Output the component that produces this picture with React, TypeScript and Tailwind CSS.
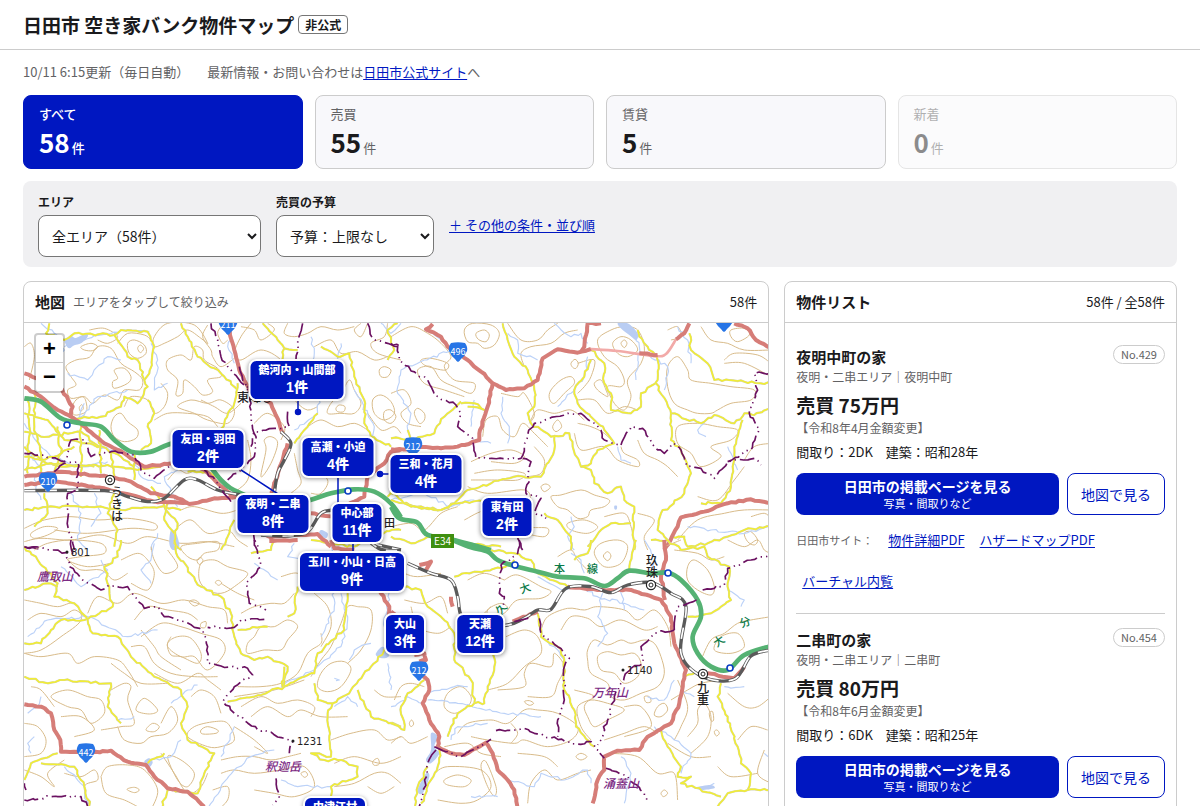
import { Fragment } from "react";

type Point = [number, number];

const parse = (s: string): Point[] =>
  s.split(" ").map((p) => p.split(",").map(Number) as Point);

/* Smooth curve through a list of points; a trailing "z" closes the ring. */
function smooth(src: string): string {
  const closed = src.endsWith("z");
  const pts = parse(closed ? src.slice(0, -1).trim() : src);
  const n = pts.length;
  const at = (i: number): Point =>
    closed ? pts[(i + n) % n] : pts[Math.max(0, Math.min(n - 1, i))];
  let d = `M${pts[0][0]},${pts[0][1]}`;
  const segments = closed ? n : n - 1;
  for (let i = 0; i < segments; i++) {
    const [a, b, c, e] = [at(i - 1), at(i), at(i + 1), at(i + 2)];
    d += `C${b[0] + (c[0] - a[0]) / 6},${b[1] + (c[1] - a[1]) / 6} ${c[0] - (e[0] - b[0]) / 6},${c[1] - (e[1] - b[1]) / 6} ${c[0]},${c[1]}`;
  }
  return d;
}

/* Irregular line for rivers, boundaries and mountain roads. */
function rough(src: string, amount: number): string {
  const pts = parse(src);
  let seed = pts[0][0] * 13 + pts[0][1] * 7 + 3;
  const rand = () => {
    seed = (seed * 9301 + 49297) % 233280;
    return seed / 233280 - 0.5;
  };
  let d = `M${pts[0][0]},${pts[0][1]}`;
  for (let i = 1; i < pts.length; i++) {
    const [x0, y0] = pts[i - 1];
    const [x1, y1] = pts[i];
    const steps = Math.max(1, Math.round(Math.hypot(x1 - x0, y1 - y0) / 12));
    for (let k = 1; k <= steps; k++) {
      const t = k / steps;
      const j = k === steps ? 0 : amount;
      d += `L${(x0 + (x1 - x0) * t + rand() * j).toFixed(1)},${(y0 + (y1 - y0) * t + rand() * j).toFixed(1)}`;
    }
  }
  return d;
}

interface Tile {
  x: number;
  y: number;
  contours: string[];
  rivers: string[];
  lakes: string[];
  yellow: string[];
  red: string[];
  paleRed?: string[];
  green: string[];
  rail: string[];
  border: string[];
}

const tiles: Tile[] = [
  {
    x: 20,
    y: 280,
    contours: [
      "135,260 165,240 205,232 230,200 270,205 300,250 340,275 365,300 355,330 310,330 290,360 250,345 215,370 190,350 150,355 140,330 165,315 150,290z",
      "280,270 310,265 330,290 320,310 280,325 275,305 290,295z",
      "320,190 340,180 370,195 375,220 350,235 325,220z",
      "350,205 358,195 368,206 358,218z",
      "180,200 210,190 230,200 215,212 190,210z",
      "440,240 480,225 510,240 520,200 545,210 550,240 590,265 600,290 560,300 575,335 545,345 520,320 490,300 485,340 465,345 470,300 440,270z",
      "400,170 440,130 520,135 560,190 540,175 500,150 470,170 430,190 400,200z",
      "155,380 165,360 185,350 195,365 195,395 160,405z",
      "175,382 183,374 187,386 178,394z",
      "280,410 300,400 320,425 350,450 345,475 310,485 280,470 270,440z",
      "400,420 440,400 500,400 560,410 590,440",
      "470,380 510,360 560,370 600,360 640,390 620,430 560,420 520,400z",
      "690,130 660,170 640,220 660,240 720,210 780,240 800,290",
      "560,135 545,170 570,210 575,230 600,260 640,235",
      "600,140 590,160 605,190 620,180",
      "660,140 700,150 720,180 760,150 740,130",
      "800,130 790,160 820,170 860,160 900,140 950,150 1000,140",
      "880,200 930,180 960,220 1010,215 1060,240 1100,230",
      "800,270 780,300 800,330 830,370 860,390 890,380",
      "920,400 930,370 960,340 985,300 1000,330 1020,370 1000,400 960,400z",
      "945,385 955,375 972,380 968,395 950,395z",
      "1055,360 1080,345 1110,365 1120,400 1090,420 1060,400z",
      "1075,270 1090,260 1110,270 1100,290 1080,290z",
      "1090,395 1110,390 1125,410 1110,430 1090,420z",
      "1040,130 1020,170 1000,150 1020,130",
      "1100,130 1090,170 1050,190 1070,220 1140,240",
      "700,430 740,400 790,440 780,480",
      "730,480 750,470 770,490 750,550 720,590 735,510z",
      "860,440 900,420 950,440 1000,430 1040,450",
      "680,480 690,540 680,600 650,630",
      "820,520 830,570 840,610 810,640",
      "10,745 70,720 150,710 230,720 320,715 400,730 400,750 330,745 200,760 100,750",
      "10,785 60,775 150,780 240,765 320,790 380,770 480,790 560,785 640,800",
      "30,760 70,740 110,745 80,765 40,775z",
      "440,600 470,570 500,580 540,560",
      "480,690 520,680 600,700 650,690",
      "470,740 510,720 560,760 620,750 650,780 680,800",
      "290,190 320,160 370,165 390,180",
      "10,200 30,190 40,230 25,300",
      "540,360 580,380 620,400 660,370",
      "1040,400 1080,450 1120,440 1140,460",
      "310,380 330,350 380,360 400,400 430,380 440,340 420,310",
      "205,150 250,145 290,170 260,190 230,180",
      "870,560 920,600 900,640 870,640",
    ],
    rivers: [
      "130,200 190,180 300,150 385,155",
      "140,280 200,300 260,230 300,240",
      "10,430 60,500 90,530 180,560 260,545",
      "20,520 60,560 40,600 60,660",
      "150,640 180,700 170,780 200,810",
      "200,480 230,500 330,520 360,590 420,610",
      "220,640 240,700 210,740",
      "60,130 100,160 130,210 100,260",
      "390,190 410,240 400,330 440,310",
      "470,570 430,590 470,680",
      "870,170 880,220 860,270 900,330 890,400 820,450",
      "960,190 950,240 920,250",
      "1000,330 1060,440 1040,500",
      "410,760 390,810",
      "1080,130 1110,160 1140,130",
      "680,670 760,700 860,720",
      "640,140 620,200 640,250",
      "190,370 170,420 230,350 320,330",
    ],
    lakes: [
      "132,180 150,168 165,174 195,160 200,170 180,190 160,196 145,205 135,195z",
      "450,750 465,760 475,800 455,810 445,790z",
      "900,750 920,760 915,775 895,765z",
    ],
    yellow: [
      "85,130 75,160 130,180 160,160 280,165 300,150 380,155 400,200 385,280 370,300 380,320 350,370 310,350 300,380 240,410 180,415 150,420",
      "280,165 320,230 350,240 370,300",
      "380,360 400,400 380,440 390,490 360,510",
      "10,455 60,470 180,455 220,490 300,530 340,560",
      "20,350 25,440 20,580",
      "40,340 40,440 60,520 60,580",
      "10,400 80,420 130,480 240,500",
      "10,530 120,560 260,555 350,570 420,560",
      "110,440 120,520 100,580",
      "180,430 180,590",
      "235,450 240,580",
      "270,520 280,600",
      "340,520 340,600",
      "10,500 60,540 100,530 160,500",
      "10,570 90,550 220,560",
      "10,690 100,680 230,680 300,690 420,680 480,690",
      "70,640 80,700 40,740",
      "390,620 430,680 470,730 460,790 480,810",
      "280,640 260,700 290,750 280,800",
      "480,130 500,170 530,230 580,265 610,290 650,330",
      "650,310 640,370 610,430 590,470",
      "725,130 770,180 790,205 830,210",
      "790,205 780,260 790,300",
      "900,200 950,230 985,220 1000,290 1030,360 1030,430 1050,470 1110,500",
      "890,400 860,440 820,490",
      "500,575 570,580 610,610",
      "440,670 430,720 460,760",
      "640,720 620,770 600,810",
      "870,780 920,790 1000,800 1060,760 1140,750",
      "1110,560 1120,600 1100,650",
      "1100,240 1120,210 1100,150 1130,130",
    ],
    red: [
      "10,320 60,350 110,390 165,420 200,450 250,490 310,520 370,560 440,552 480,540 550,570 590,610 640,655",
      "10,280 60,300 115,320 155,380 148,412",
      "10,590 120,575 260,590 330,605 390,640 460,650 505,672 580,655 650,650",
      "10,615 100,605 250,625 330,645 400,665 500,668",
      "622,140 640,210 655,270 685,330 750,370 775,430 785,460",
      "800,490 785,540 765,600 750,640",
      "1140,508 1110,515 1090,550 1040,590 1030,650 1000,665 985,670",
      "700,740 750,772 810,765 890,762 930,800",
      "870,700 940,710",
    ],
    green: [
      "10,355 60,365 120,415 180,430 240,440 280,480 330,515 390,515 455,490 520,500 600,600 660,640 780,680 868,660 930,640 1000,628 1060,635 1110,670 1140,712",
    ],
    rail: [
      "10,632 250,632 320,650 380,665 430,655 490,600 530,600 590,630 660,645",
      "720,765 800,768 860,755 900,700 940,690",
      "1050,790 1140,810",
      "780,455 810,490 790,540 770,580 760,640",
    ],
    border: [
      "570,130 590,180 600,230 630,270 655,300 680,320 690,370 690,430 705,470 700,530 660,570 620,600",
      "655,260 665,300 680,330 690,350",
      "845,130 830,190 825,240",
      "800,395 805,440 760,445 700,455 690,500",
      "10,520 70,525 130,545 150,480 190,480 210,530 270,515 340,525 360,570 400,595 450,555",
      "100,575 130,550 170,545 170,630 140,640 140,720 155,790 160,810",
      "1040,130 1055,175 1100,190 1140,200",
      "550,570 590,610 630,665",
      "690,745 715,810",
      "10,800 60,805",
    ],
  },
  {
    x: 390,
    y: 280,
    contours: [
      "220,150 245,130 300,135 325,160 310,195 280,205 260,190 230,185z",
      "255,160 280,150 295,165 285,185 262,178z",
      "0,170 60,140 110,160 150,190 180,230 160,260 190,300 250,310 240,340 190,320 150,300 120,260 80,270 100,310 160,330 220,350",
      "90,240 120,235 170,250 165,270 130,265 100,255z",
      "0,340 40,330 60,370 30,400 50,430 90,440",
      "70,400 80,385 100,400 100,420 85,430z",
      "350,130 390,180 440,180 470,150 500,130",
      "400,260 390,220 420,200 480,190 520,160 560,150",
      "480,330 510,300 540,290 550,310 520,340 490,370 475,355z",
      "540,250 552,238 562,250 555,265 545,262z",
      "640,230 620,180 660,150 700,140 740,150 760,200 750,250 710,300 720,350 700,390 670,370 650,320 690,320 700,300 680,260z",
      "665,190 690,170 720,180 740,210 710,230 680,220z",
      "690,190 700,180 708,190 700,203z",
      "610,310 630,300 645,330 650,350 620,330z",
      "560,250 610,240 600,290 580,320 560,340",
      "830,260 860,230 890,270 900,300 960,310 1020,320 1090,330 1080,360 1020,370 980,390 960,400 920,400 890,390 850,370 830,320z",
      "1000,240 1030,220 1100,225 1140,250",
      "1000,250 1060,250 1140,290",
      "1020,150 1060,145 1075,165 1040,185 1020,170z",
      "930,140 960,180 1010,190 1060,210 1140,210",
      "860,440 920,430 980,440 1040,450 1020,480 960,500 990,530 930,560 900,520 860,490z",
      "480,650 510,645 570,630 610,645 655,660 640,680 600,690 590,710 560,715 530,690 500,680z",
      "450,620 465,612 478,622 460,635z",
      "485,440 500,420 512,440 495,455z",
      "240,545 300,520 360,510 400,530 370,550 300,545",
      "250,580 320,570 400,580 380,600 310,600 240,600",
      "275,470 285,420 320,410 335,450 370,470 395,430 430,460 470,500",
      "430,500 460,540 450,580 410,590",
      "550,460 570,510 640,500 680,540 740,560 740,540 700,520 690,500",
      "560,360 610,360 650,400 700,380 740,390",
      "560,430 600,440 640,460 670,490",
      "420,420 440,390 490,400 540,390 580,420",
      "230,620 290,640 400,630 420,660",
      "220,720 290,690 380,710 410,740 470,745 460,770 400,760",
      "0,740 60,730 100,750 150,700 200,680",
      "740,480 760,520 800,540 830,560 860,590",
      "640,710 700,700 720,740 730,790",
      "740,700 790,720 760,770 770,810",
      "1060,760 1080,755 1100,780 1090,795 1070,785z",
      "860,780 920,720 1000,700 1060,690 1140,690",
      "1080,710 1120,700 1140,715",
      "530,730 580,720 620,740 590,760 540,750z",
      "60,600 30,570",
      "330,340 380,350 400,340 430,400 415,430",
      "1060,540 1090,500 1140,490",
      "920,650 980,660 1030,600 1060,560",
      "830,150 860,140 870,170 840,180",
    ],
    rivers: [
      "120,150 180,210 100,240 30,270 20,340 60,400 50,450",
      "350,160 380,180 380,220 440,240",
      "490,130 540,170 570,160 590,190",
      "690,135 730,160 745,200 735,300",
      "590,230 580,290 540,340 500,380",
      "335,350 330,400 355,440 350,490",
      "240,440 250,360",
      "680,500 690,540 720,550",
      "0,660 100,640 180,680 250,660",
      "760,220 830,260 820,330",
      "890,740 960,750 1060,760 1130,740",
      "940,430 920,450 945,470",
      "1010,500 1040,570",
      "540,710 550,740 530,770 550,810",
      "860,140 890,180 900,250",
      "245,480 300,490",
    ],
    lakes: [
      "680,130 710,130 740,160 735,180 715,165 695,150z",
      "670,678 678,678 677,688 671,688z",
    ],
    yellow: [
      "335,130 350,180 370,230 410,270 430,330 430,380 410,400 420,430 480,470 535,460 545,500 570,560 600,570 610,610 650,640 690,620 700,660 730,680 725,720 730,810",
      "490,470 490,510 450,590 370,590 300,610 230,630 190,670 150,690 80,680 0,660",
      "0,640 60,680 150,690 200,670 300,660",
      "600,240 580,290 550,330 560,370 610,420 640,450 670,490 620,510 600,550 570,560",
      "600,210 640,250 640,310 660,340 660,390 720,400 750,380 750,340 800,300 800,240 770,200 745,170 740,150",
      "895,160 900,210 950,250 970,300 1060,305 1140,310",
      "795,310 840,400 930,430 970,405 1030,430 1060,400 1090,405 1140,380",
      "840,400 840,480 870,510 900,580 880,640 810,700 800,750 830,780",
      "1055,420 1030,500 1025,560 1020,620 990,670 930,670",
      "210,370 250,370 280,390 230,380",
      "210,365 160,410 130,460 50,480 0,475",
      "50,450 60,500",
      "460,700 500,720 540,770 540,810",
      "590,800 630,750 660,730 720,730",
      "840,770 880,770 890,800 950,790 1010,770 1060,750 1140,740",
      "0,770 60,790 120,770",
      "240,790 330,800",
    ],
    red: [
      "125,132 105,148 150,170 170,200 230,240 270,275 305,310 290,380 265,460 265,480 200,500 150,505 80,500",
      "305,310 345,330 400,325 440,300 455,235 500,208 560,218 600,207",
      "630,130 590,130 580,200 570,215",
      "0,508 60,510",
      "745,220 800,225",
      "855,178 880,160 895,130",
      "1030,130 1070,145 1095,180 1140,205",
      "820,810 860,740 870,712 940,695 1010,670 1080,658 1140,670",
    ],
    paleRed: ["600,207 680,213 790,228 825,222 855,178"],
    green: ["0,680 25,715 80,728 110,765 200,783 300,810"],
    rail: [],
    border: [
      "0,190 20,200 25,240 80,285 110,300 130,345 195,375 210,400 200,440 245,475 255,535 390,535 410,465 430,430 530,400 570,400 630,450 640,480 690,495",
      "690,495 720,440 755,445 790,500 820,520 845,490 870,510 890,560 930,565 970,595 1010,545 1090,535 1110,555",
      "1140,280 1090,280 1100,330 1075,400 1105,445 1080,510 1010,545",
      "395,535 420,545 405,640 450,655 430,700 465,715",
      "380,770 395,810",
    ],
  },
  {
    x: 20,
    y: 540,
    contours: [
      "40,30 80,10 150,0 240,10 250,40 180,50 140,60 200,80 270,70",
      "140,60 180,90 240,90 280,120 320,100",
      "300,60 350,40 380,60 400,100 380,150 330,130",
      "390,20 400,60 430,100 470,80 440,30",
      "480,20 530,10 590,5 590,30 550,40 530,60 500,50z",
      "528,62 538,52 546,62 536,74z",
      "540,70 580,60 620,80 680,100 640,140 600,160 560,150 535,120z",
      "583,127 592,121 602,128 593,136z",
      "10,180 60,190 110,200 160,190 180,240 120,290 60,330 10,340",
      "20,240 60,220 120,230 160,210 190,230",
      "200,220 230,170 290,190 340,160 420,190 490,180 560,200 610,210 620,250",
      "340,240 380,200 440,210 500,220 530,240",
      "360,290 420,250 480,260 540,280 600,300 610,340 560,390 520,350 480,350 440,320 450,290",
      "540,250 555,245 553,262 540,262z",
      "505,185 520,180 535,190 520,198z",
      "440,310 470,290 510,295 540,340 530,370 480,350 450,345z",
      "10,340 60,350 140,340 170,370 220,350 290,360 320,390 350,440",
      "270,370 310,400 360,430 440,430",
      "330,320 370,320 400,370 450,400 520,410 590,410",
      "400,400 470,430 530,400 560,420 600,450",
      "360,270 400,320 420,350 480,390",
      "90,470 140,450 200,470 240,480 250,520 210,550 180,510 140,500z",
      "345,510 370,475 410,510 385,522z",
      "270,450 310,430 330,440 320,480 340,550 300,560 240,570",
      "420,550 450,500 470,540 440,580 390,590 360,610 310,600 290,560",
      "375,570 395,550 415,560 400,575z",
      "540,570 560,560 590,570 585,580 545,582z",
      "500,590 520,560 580,545 620,550 640,600 600,620 560,620z",
      "510,470 540,450 580,470 600,520",
      "120,530 180,530 220,570 160,590",
      "10,550 50,560 75,600 60,640 10,650",
      "240,710 260,680 320,675 370,690 410,750 390,810",
      "240,710 255,760 310,780 350,800",
      "318,748 340,742 355,750 340,758z",
      "130,700 180,710 220,690 230,720 190,740 210,810",
      "10,690 60,710 100,740 80,700 130,660",
      "440,650 480,660 520,700 500,740 470,720z",
      "420,640 460,700 500,760 540,740 560,700",
      "600,660 650,650 700,650 750,660 800,650 840,640",
      "600,700 640,690 700,700 780,690 850,680 880,740 820,770 760,760 700,750",
      "575,750 620,740 620,780 590,810",
      "840,700 853,695 860,705 850,712z",
      "650,440 720,440 780,430 830,400 860,340 900,310 900,280",
      "640,470 760,450 850,420",
      "680,340 730,330 780,330 800,300 830,260 800,240 760,260 720,260 700,290 680,310z",
      "660,220 700,200 750,190 790,190 820,160",
      "880,160 920,200 930,260 900,320",
      "890,440 900,400 930,370 970,365 990,390 960,440 920,455z",
      "870,410 900,360 930,320 960,250 980,200 1010,200",
      "1010,200 1050,210 1050,270 1020,330 980,370",
      "660,500 720,470 770,490 830,480 880,500 870,530",
      "690,530 740,500 800,530 840,510 900,530 980,530",
      "640,560 700,600 740,640 700,620",
      "930,600 990,580 1060,570 1100,600 1140,590",
      "940,670 1000,650 1080,670 1140,650",
      "940,740 1000,730 1060,700 1100,700 1140,730",
      "1055,665 1070,655 1075,672 1060,676z",
      "1040,740 1080,760 1120,740",
      "1060,450 1090,470 1140,470",
      "780,110 830,100 850,140",
      "600,130 650,160 700,180",
      "100,500 60,450 30,440",
    ],
    rivers: [
      "120,80 180,140 260,90 240,60",
      "20,290 80,240 200,230 320,290 410,270",
      "400,10 390,60 360,90 390,130",
      "700,70 770,120",
      "820,10 800,50 840,60",
      "450,490 500,450 530,435",
      "640,560 620,610 600,650",
      "760,630 690,650 640,690 600,740 560,810",
      "780,720 830,740 930,740",
      "930,20 940,200 900,290",
      "1110,130 1090,260 1110,300",
      "1050,310 1000,330 985,360",
      "1100,370 1110,450",
      "960,160 980,240 960,320 880,390 780,440",
      "60,470 50,500 20,520",
      "40,590 20,610 30,640",
      "290,540 340,530",
      "940,500 980,470 1010,500",
      "940,415 955,420 945,422",
      "390,660 450,650 480,600",
      "130,680 190,740 200,810",
    ],
    lakes: [
      "1065,340 1085,320 1105,345 1090,355 1070,350z",
      "370,665 385,655 395,668 383,682z",
    ],
    yellow: [
      "300,0 290,50 250,80 265,140 275,200 235,220 190,240 120,240 90,270 60,310 10,310",
      "10,20 50,60 110,130 100,170 160,190 200,240 215,280 290,290 330,350 400,410 480,450 500,500 480,550 500,600 580,640 550,700 530,760 440,750",
      "460,0 470,50 540,140 600,170 630,220 640,290 660,340 700,360 740,350 800,380 785,440 850,410 880,400 890,340 970,270 980,160",
      "620,485 700,470 790,440",
      "785,440 790,380",
      "650,270 740,260",
      "830,140 820,220 800,230",
      "880,430 890,480 935,490 920,520 925,600 930,650 870,640 910,660 950,660 1010,680 1010,710 930,740 930,770",
      "935,490 990,450 1050,380 1090,330 1110,300",
      "1010,450 1050,530 1140,560",
      "10,410 80,430 130,420 270,430 260,500 300,550",
      "10,720 30,670 110,640",
      "60,670 160,680 190,740 210,810",
      "440,750 420,810",
      "380,670 430,640",
      "10,150 80,130 110,140",
      "690,40 750,30 760,0",
    ],
    red: [
      "10,493 60,500 90,520 100,570 118,600 120,635 160,635 200,640 270,632 320,665 375,675 400,710 440,745 500,755 550,800",
      "930,0 940,25 1000,30",
      "1075,150 1105,200 1105,240",
      "745,3 830,0",
    ],
    green: [],
    rail: ["1040,0 1080,28 1140,32"],
    border: [
      "10,20 60,22 135,38 145,80 185,120 240,150 260,138 320,140 340,170 370,205 410,200 430,230 490,245 520,262 545,270 560,320 560,370 600,378 680,385 695,405 640,440 605,485 640,520 710,570 740,575 815,605 805,640",
      "150,0 155,40 135,38",
      "700,0 720,80 675,130 685,190 735,210",
      "730,238 660,240 640,262 560,262",
      "765,715 775,770 755,795",
      "10,780 90,770 180,770 200,800",
      "10,730 15,750",
    ],
  },
  {
    x: 390,
    y: 540,
    contours: [
      "610,40 630,10 680,0 710,20 690,70 640,80z",
      "637,48 650,35 660,48 650,62z",
      "500,50 540,30 560,60 600,100",
      "0,80 40,100 80,110 150,100",
      "40,180 100,190 150,170 170,220",
      "290,210 330,190 350,210 300,240z",
      "340,120 380,105 450,140 480,155 450,175 380,180 350,210",
      "230,120 280,100 340,120",
      "345,290 400,270 440,290 450,340 400,380 350,430 290,450",
      "450,270 470,230 530,205 580,210 620,200 700,210 740,240 790,210 830,260 840,320",
      "510,270 540,230 590,235 630,260 690,240 760,270 800,260",
      "590,330 610,300 650,315 690,300 720,310 760,300 790,310 810,350 820,400 800,440 750,460 700,480 660,470 650,430 600,400 590,360z",
      "620,350 650,335 690,345 730,340 750,370 740,410 700,430 670,400 630,390z",
      "580,500 600,480 650,490 700,510 650,540 610,560 590,530z",
      "550,450 610,470 560,500 570,560 600,600",
      "800,500 820,490 830,510 810,530 790,525z",
      "760,470 775,470 780,485 765,487z",
      "400,485 415,482 428,490 415,496z",
      "200,580 230,550 300,540 350,550 400,510 440,510 500,520 560,560 540,600 470,620 400,600 370,610 290,600 240,590",
      "360,550 380,580 360,610",
      "160,500 170,460 210,440 240,470 230,500 190,520z",
      "320,450 400,440 400,400 420,370 480,380 490,340 520,380 500,430 480,470 410,470",
      "55,550 62,540 68,552 60,560z",
      "10,480 30,440 60,430 100,440",
      "0,610 30,590 60,610 110,590",
      "130,700 170,680 270,690 300,740 260,780 210,790 140,780",
      "160,720 200,705 240,720 220,740 170,735z",
      "270,680 285,665 315,740 310,768 290,740z",
      "410,790 420,730 460,690 500,720 560,700 600,690",
      "555,650 570,640 588,650 570,660z",
      "660,640 740,650 800,700 850,700 860,780",
      "810,760 820,750 830,760 818,770z",
      "640,600 700,580 760,560 800,580",
      "830,610 900,650 960,650",
      "890,590 920,550 920,510 940,490 960,530 950,590 900,640",
      "955,520 965,515 968,540 960,542z",
      "970,575 978,570 985,580 976,588z",
      "930,360 960,300 1000,280 1040,250 1080,240 1140,230",
      "970,330 990,290 1040,280 1060,320 1020,340z",
      "890,80 910,60 950,90 970,140 960,165 920,150 890,120z",
      "820,20 870,0",
      "850,30 920,40 960,60 1000,50",
      "1010,0 1060,20 1100,0 1120,30 1140,40",
      "1040,600 1080,560 1130,570",
      "1010,460 1060,500 1100,500 1140,470",
      "1120,630 1100,700 1140,730",
      "980,680 1020,710 1100,700",
      "380,640 460,650 500,680",
      "160,620 230,610 270,640 330,650",
      "840,480 890,450 930,430 990,420",
      "700,500 750,500 780,560 700,590",
      "250,260 280,220 300,200",
      "60,200 80,260 140,280 180,260",
      "860,420 890,500 870,560 850,600",
    ],
    rivers: [
      "440,110 520,150 570,140 620,170 700,190 760,210",
      "635,160 620,230 650,280 620,320",
      "690,140 700,210",
      "110,460 190,440 230,440",
      "110,480 200,490 340,520 450,530",
      "0,500 50,470 100,490",
      "180,600 200,560 290,550",
      "350,720 430,740 450,700 520,720 590,690 600,730",
      "240,770 320,770",
      "700,790 720,700 690,650",
      "790,560 850,600 900,640 870,700",
      "950,740 970,730",
      "1120,640 1140,650",
      "1010,150 1060,180 1050,200",
      "910,470 870,450",
      "1000,440 1060,440",
      "540,40 570,60 580,100",
      "760,0 790,50 780,110",
      "450,290 490,320 520,360",
      "850,420 820,480 770,470",
    ],
    lakes: [
      "120,580 140,590 130,620 145,640 120,670 105,660 120,630z",
      "105,700 115,710 95,760 80,750z",
      "915,742 960,735 970,745 930,750z",
    ],
    yellow: [
      "40,140 90,150 110,200 150,230 190,280 190,360 240,420 250,490 200,520 180,560 170,590",
      "310,330 310,380 290,440 280,490 250,490",
      "190,110 250,95 330,85 370,60",
      "300,30 370,40 420,60 440,100 530,140",
      "440,220 450,290 500,320 520,360 520,450 550,510 555,560 610,620",
      "550,60 590,40 600,0",
      "735,0 715,90",
      "780,0 830,0 870,30 940,20 950,50 1015,80 1010,130 1020,180 960,220 890,230",
      "990,430 980,470 1010,530 1040,620 1050,670 1080,700 1070,750 1010,760 980,800",
      "810,570 830,620 870,680 860,710 900,710 870,730 990,770",
      "1070,750 1140,750",
      "880,410 910,400",
      "0,550 40,570 30,500 50,460 100,420",
      "150,620 140,680 120,720 90,790",
      "110,680 80,740 70,810",
    ],
    red: [
      "0,215 20,230",
      "70,345 100,340 105,360 85,365",
      "80,400 110,420 115,450 95,490 115,540 145,590 140,620 180,640 220,645 285,608 305,640 320,690 350,720 370,750 380,810",
      "820,0 825,60 810,110 822,180",
      "530,140 620,150 720,150 810,180 840,230 850,310 885,390 865,490 840,550 770,590 745,630 680,632 640,650 640,690 620,720 605,790",
      "85,75 120,65 105,90",
      "180,170 185,200",
      "950,400 1030,415 1060,380",
      "365,245 440,215",
    ],
    green: [
      "185,0 240,22 290,35 320,60 370,78 440,95 500,110 580,115 640,138 680,115 715,92 780,100 831,98 870,120 920,180 930,230 905,290 920,340 960,380 1010,390 1060,345 1140,318",
    ],
    rail: [
      "50,70 120,100 180,120 200,170 210,225 250,260 350,255 400,235 440,210 480,208 525,145 600,140 660,158 710,135 782,128 840,160 885,200 870,340 935,410 1030,418 1080,348 1140,330",
    ],
    border: [
      "385,0 380,40 330,75 325,160 340,170 330,210",
      "370,245 410,235 400,225",
      "445,235 450,280 500,320 535,355 520,380 520,480 500,540 500,590",
      "315,572 400,565 430,580 555,612 600,605 640,655",
      "720,385 700,410 670,470 650,540 620,615",
      "850,270 790,280 750,320 755,370 720,385",
      "850,270 860,200 920,178",
      "935,150 1000,135 1010,85 1080,60 1140,45",
      "645,685 700,705 760,760 770,790",
      "130,620 210,650 300,598",
      "135,630 110,670 95,770 85,810",
    ],
  },
];

const shields = [
  { x: 227, y: 325, n: "211" },
  { x: 457, y: 352, n: "496" },
  { x: 723, y: 322, n: "" },
  { x: 412, y: 447, n: "212" },
  { x: 47, y: 482, n: "210" },
  { x: 418, y: 671, n: "212" },
  { x: 85, y: 753, n: "442" },
];

const interchanges: Point[] = [[66, 425], [347, 491], [514, 565], [667, 573], [729, 668]];
const stations: Point[] = [[109, 480], [650, 585], [702, 674]];

const placeNames = [
  { x: 236, y: 402, s: "東峰", size: 12, fill: "#222" },
  { x: 383, y: 527, s: "田", size: 11, fill: "#222" },
  { x: 553, y: 573, s: "本", size: 11, fill: "#0a7a48" },
  { x: 586, y: 573, s: "線", size: 11, fill: "#0a7a48" },
];

const verticalNames = [
  { x: 116, y: 486, s: "うきは" },
  { x: 651, y: 554, s: "玖珠" },
  { x: 702, y: 681, s: "九重" },
];

const tilted = [
  { x: 524, y: 588, s: "大", r: -20 },
  { x: 500, y: 609, s: "久", r: -50 },
  { x: 718, y: 641, s: "大", r: -35 },
  { x: 744, y: 622, s: "分", r: -20 },
];

const peaks = [
  { x: 36, y: 581, s: "鷹取山" },
  { x: 264, y: 771, s: "釈迦岳" },
  { x: 591, y: 697, s: "万年山" },
  { x: 602, y: 788, s: "涌蓋山" },
];

const heights = [
  { x: 66, y: 552, s: "801" },
  { x: 292, y: 741, s: "1231" },
  { x: 622, y: 670, s: "1140" },
];

function BaseMap() {
  return (
    <svg
      className="block h-full w-full"
      viewBox="23 323 745 540"
      preserveAspectRatio="xMinYMin slice"
      fill="none"
      aria-hidden="true"
      fontFamily="'Noto Sans CJK JP', sans-serif"
    >
      <rect x="23" y="323" width="745" height="540" fill="#fff" />
      {tiles.map((t) => (
        <g
          key={`${t.x}-${t.y}`}
          transform={`translate(${t.x} ${t.y}) scale(0.3333)`}
          strokeLinejoin="round"
        >
          {t.contours.map((c, i) => (
            <path key={i} d={smooth(c)} stroke="#d8bb8a" strokeWidth="3" />
          ))}
          {t.rivers.map((c, i) => (
            <path key={i} d={rough(c, 9)} stroke="#bcd2f8" strokeWidth="3.5" />
          ))}
          {t.lakes.map((c, i) => (
            <path key={i} d={smooth(c)} fill="#b9cdf3" />
          ))}
          {t.yellow.map((c, i) => (
            <Fragment key={i}>
              <path d={rough(c, 8)} stroke="#d2d2b4" strokeWidth="6.5" />
              <path d={rough(c, 8)} stroke="#f2ee32" strokeWidth="4.5" />
            </Fragment>
          ))}
          {t.paleRed?.map((c, i) => (
            <path key={i} d={smooth(c)} stroke="#f2aaa8" strokeWidth="8" />
          ))}
          {t.red.map((c, i) => (
            <path key={i} d={rough(c, 4)} stroke="#d67d78" strokeWidth="12" />
          ))}
          {t.green.map((c, i) => (
            <path key={i} d={smooth(c)} stroke="#55b273" strokeWidth="14" />
          ))}
          {t.rail.map((c, i) => (
            <Fragment key={i}>
              <path d={smooth(c)} stroke="#5a5a5a" strokeWidth="10" />
              <path d={smooth(c)} stroke="#fff" strokeWidth="5" strokeDasharray="34 30" />
            </Fragment>
          ))}
          {t.border.map((c, i) => (
            <path
              key={i}
              d={rough(c, 8)}
              stroke="#6b1161"
              strokeWidth="5"
              strokeDasharray="44 12 4 12 4 12"
            />
          ))}
        </g>
      ))}

      {interchanges.map(([x, y]) => (
        <circle key={x} cx={x} cy={y} r="3" fill="#fff" stroke="#0b3fc4" strokeWidth="1.6" />
      ))}
      {stations.map(([x, y]) => (
        <g key={x}>
          <circle cx={x} cy={y} r="4.6" fill="#fff" stroke="#222" strokeWidth="1.2" />
          <circle cx={x} cy={y} r="2" stroke="#222" strokeWidth="1" />
        </g>
      ))}
      <circle cx="266" cy="399" r="3.5" stroke="#222" />

      {shields.map((s) => (
        <g key={`${s.x}-${s.y}`} transform={`translate(${s.x} ${s.y})`}>
          <path
            d="M-7,-9Q0,-10.5 7,-9Q10,-5 9,-1Q7,4 3,7Q1,10 0,10Q-1,10 -3,7Q-7,4 -9,-1Q-10,-5 -7,-9Z"
            fill="#2775e6"
          />
          <text y="3" textAnchor="middle" fontSize="9" fill="#fff">
            {s.n}
          </text>
        </g>
      ))}
      <rect x="430" y="534" width="23" height="14" fill="#3f8f10" />
      <text x="441.5" y="545" textAnchor="middle" fontSize="10" fill="#fff">
        E34
      </text>

      {placeNames.map((p) => (
        <text key={`${p.x}-${p.y}`} x={p.x} y={p.y} fontSize={p.size} fill={p.fill} fontWeight="500">
          {p.s}
        </text>
      ))}
      {verticalNames.map((p) => (
        <text
          key={p.s}
          x={p.x}
          y={p.y}
          fontSize="12"
          fill="#222"
          fontWeight="500"
          writingMode="vertical-rl"
        >
          {p.s}
        </text>
      ))}
      {tilted.map((p) => (
        <text
          key={`${p.x}-${p.y}`}
          transform={`translate(${p.x} ${p.y}) rotate(${p.r})`}
          y="4"
          textAnchor="middle"
          fontSize="11"
          fill="#0a7a48"
          fontWeight="500"
        >
          {p.s}
        </text>
      ))}
      {peaks.map((p) => (
        <text key={p.s} x={p.x} y={p.y} fontSize="12" fontStyle="italic" fill="#7c2a84" fontWeight="500">
          {p.s}
        </text>
      ))}
      {heights.map((p) => (
        <g key={p.s} fill="#222">
          <circle cx={p.x} cy={p.y} r="1.5" />
          <text x={p.x + 4} y={p.y + 3.5} fontSize="10" fontFamily="'DejaVu Sans', sans-serif">
            {p.s}
          </text>
        </g>
      ))}

      <g stroke="#0017c1" strokeWidth="1.5" fill="#0017c1">
        <path d="M297 400V412M379 474H391M240 470L277 494M337 476V504M352 542V552" />
        <circle cx="297" cy="412" r="2.5" />
        <circle cx="379" cy="474" r="2.5" />
      </g>
    </svg>
  );
}

/* Marker centres, measured from the top left corner of the map. */
const markers = [
  { name: "鶴河内・山間部", count: 1, x: 273, y: 57 },
  { name: "友田・羽田", count: 2, x: 184, y: 126 },
  { name: "高瀬・小迫", count: 4, x: 314, y: 134 },
  { name: "三和・花月", count: 4, x: 402, y: 151 },
  { name: "夜明・二串", count: 8, x: 249, y: 191 },
  { name: "中心部", count: 11, x: 333, y: 200 },
  { name: "東有田", count: 2, x: 483, y: 194 },
  { name: "玉川・小山・日高", count: 9, x: 328, y: 249 },
  { name: "大山", count: 3, x: 381, y: 311 },
  { name: "天瀬", count: 12, x: 456, y: 311 },
  { name: "中津江村", count: 1, x: 311, y: 494 },
];

const tabs = [
  { label: "すべて", count: 58 },
  { label: "売買", count: 55 },
  { label: "賃貸", count: 5 },
  { label: "新着", count: 0 },
];

const tabStyles = {
  active: "border-[#0017c1] bg-[#0017c1] text-white",
  normal: "border-[#cccccc] bg-[#f8f8fb] text-[#1a1a1c]",
  empty: "border-[#cccccc] bg-[#f8f8fb] text-[#1a1a1c] opacity-50",
};

const listings = [
  {
    no: "429",
    title: "夜明中町の家",
    area: "夜明・二串エリア｜夜明中町",
    price: "売買 75万円",
    note: "【令和8年4月金額変更】",
    spec: "間取り：2DK　建築：昭和28年",
    links: ["物件詳細PDF", "ハザードマップPDF", "バーチャル内覧"],
  },
  {
    no: "454",
    title: "二串町の家",
    area: "夜明・二串エリア｜二串町",
    price: "売買 80万円",
    note: "【令和8年6月金額変更】",
    spec: "間取り：6DK　建築：昭和25年",
    links: [],
  },
];

const link = "text-[#0017c1] underline underline-offset-2";

export default function App() {
  return (
    <div
      lang="ja"
      className="min-h-screen bg-white font-['Noto_Sans_CJK_JP',sans-serif] text-[13px] leading-5 text-[#1a1a1c]"
    >
      <header className="flex items-center gap-1 border-b border-[#cccccc] px-[23px] py-2.5">
        <h1 className="text-[19px] leading-[29px] font-bold">日田市 空き家バンク物件マップ</h1>
        <span className="rounded border border-[#767676] px-[6px] text-xs leading-[17px] font-bold">
          非公式
        </span>
      </header>

      <main className="px-[23px] pt-3">
        <p className="flex gap-[18px] text-[#626264]">
          <span>10/11 6:15更新（毎日自動）</span>
          <span>
            最新情報・お問い合わせは
            <a href="#official" className={link}>
              日田市公式サイト
            </a>
            へ
          </span>
        </p>

        <div className="mt-[13px] grid grid-cols-4 gap-3">
          {tabs.map((t, i) => (
            <button
              key={t.label}
              type="button"
              disabled={t.count === 0}
              className={`rounded-lg border px-[15px] py-2 text-left ${
                i === 0 ? tabStyles.active : t.count === 0 ? tabStyles.empty : tabStyles.normal
              }`}
            >
              <span className={`block leading-5 ${i === 0 ? "font-medium" : "text-[#626264]"}`}>
                {t.label}
              </span>
              <span className="flex items-baseline gap-0.5">
                <span className="text-[26px] leading-9 font-bold">{t.count}</span>
                <span className={i === 0 ? "leading-5 font-medium" : "leading-5 text-[#626264]"}>
                  件
                </span>
              </span>
            </button>
          ))}
        </div>

        <form className="mt-3 flex items-center gap-[15px] rounded-lg bg-[#f0f0f2] px-[15px] pt-[11px] pb-2.5">
          <label className="flex w-[223px] flex-col gap-[3px] text-xs leading-5 font-bold">
            エリア
            <select className="h-[42px] rounded-lg border border-[#767676] bg-white px-[9px] text-sm font-normal">
              <option>全エリア（58件）</option>
            </select>
          </label>
          <label className="flex w-[158px] flex-col gap-[3px] text-xs leading-5 font-bold">
            売買の予算
            <select className="h-[42px] rounded-lg border border-[#767676] bg-white px-[9px] text-sm font-normal">
              <option>予算：上限なし</option>
            </select>
          </label>
          <button type="button" className={link}>
            ＋ その他の条件・並び順
          </button>
        </form>

        <div className="mt-3.5 grid grid-cols-[1.9fr_1fr] gap-[15px]">
          <section className="flex flex-col overflow-hidden rounded-lg border border-[#cccccc]">
            <div className="flex items-center gap-2 border-b border-[#cccccc] px-[11px] py-2.5">
              <h2 className="text-[15px] font-bold">地図</h2>
              <span className="text-xs text-[#626264]">エリアをタップして絞り込み</span>
              <span className="ml-auto">58件</span>
            </div>
            <div className="relative h-[540px] overflow-hidden font-['Liberation_Sans','Noto_Sans_CJK_JP',sans-serif]">
              <BaseMap />
              <div className="absolute top-2.5 left-2.5 flex flex-col overflow-hidden rounded border-2 border-black/20 bg-white bg-clip-padding text-[22px] font-bold text-black">
                <button type="button" aria-label="拡大" className="h-7 w-[27px] border-b border-[#cccccc] leading-7">
                  +
                </button>
                <button type="button" aria-label="縮小" className="h-7 w-[27px] leading-7">
                  −
                </button>
              </div>
              {markers.map((m) => (
                <button
                  key={m.name}
                  type="button"
                  className="absolute -translate-x-1/2 -translate-y-1/2 rounded-lg border-2 border-white bg-[#0017c1] px-2 pt-px pb-[3px] font-black whitespace-nowrap text-white shadow-[0_1px_4px_rgba(0,0,0,0.4)]"
                  style={{ left: m.x, top: m.y }}
                >
                  <span className="block text-[11px] leading-4">{m.name}</span>
                  <span className="block text-sm leading-[18px]">{m.count}件</span>
                </button>
              ))}
            </div>
          </section>

          <section className="rounded-lg border border-[#cccccc]">
            <div className="flex items-center justify-between border-b border-[#cccccc] px-[11px] py-2.5">
              <h2 className="text-[15px] font-bold">物件リスト</h2>
              <span>58件 / 全58件</span>
            </div>
            <div className="px-[11px] pt-2">
              {listings.map((l) => (
                <article
                  key={l.no}
                  className="border-b border-[#cccccc] pt-3 pb-3 last:border-b-0"
                >
                  <div className="flex items-start justify-between">
                    <h3 className="pt-0.5 text-[15px] leading-[23px] font-bold">{l.title}</h3>
                    <span className="mt-0.5 rounded-full border border-[#cccccc] px-[7px] text-[11px] leading-[17px] text-[#626264]">
                      No.{l.no}
                    </span>
                  </div>
                  <p className="text-xs leading-[18px] text-[#626264]">{l.area}</p>
                  <p className="mt-1 text-[19px] leading-[29px] font-bold">{l.price}</p>
                  <p className="text-xs leading-[18px] text-[#626264]">{l.note}</p>
                  <p className="mt-1 leading-[22px]">{l.spec}</p>
                  <div className="mt-2.5 flex gap-2">
                    <a
                      href="#detail"
                      className="flex flex-1 flex-col items-center justify-center rounded-lg bg-[#0017c1] py-1 text-sm leading-[18px] font-bold text-white"
                    >
                      日田市の掲載ページを見る
                      <span className="text-[11px] leading-4 font-normal">写真・間取りなど</span>
                    </a>
                    <button
                      type="button"
                      className="rounded-lg border border-[#0017c1] px-[13px] text-sm text-[#0017c1]"
                    >
                      地図で見る
                    </button>
                  </div>
                  {l.links.length > 0 && (
                    <div className="mt-1 flex flex-wrap items-center gap-x-[3px]">
                      <span className="mr-1.5 text-[11px] text-[#626264]">日田市サイト：</span>
                      {l.links.map((name) => (
                        <a key={name} href="#file" className={`px-1.5 leading-[41px] ${link}`}>
                          {name}
                        </a>
                      ))}
                    </div>
                  )}
                </article>
              ))}
            </div>
          </section>
        </div>
      </main>
    </div>
  );
}
